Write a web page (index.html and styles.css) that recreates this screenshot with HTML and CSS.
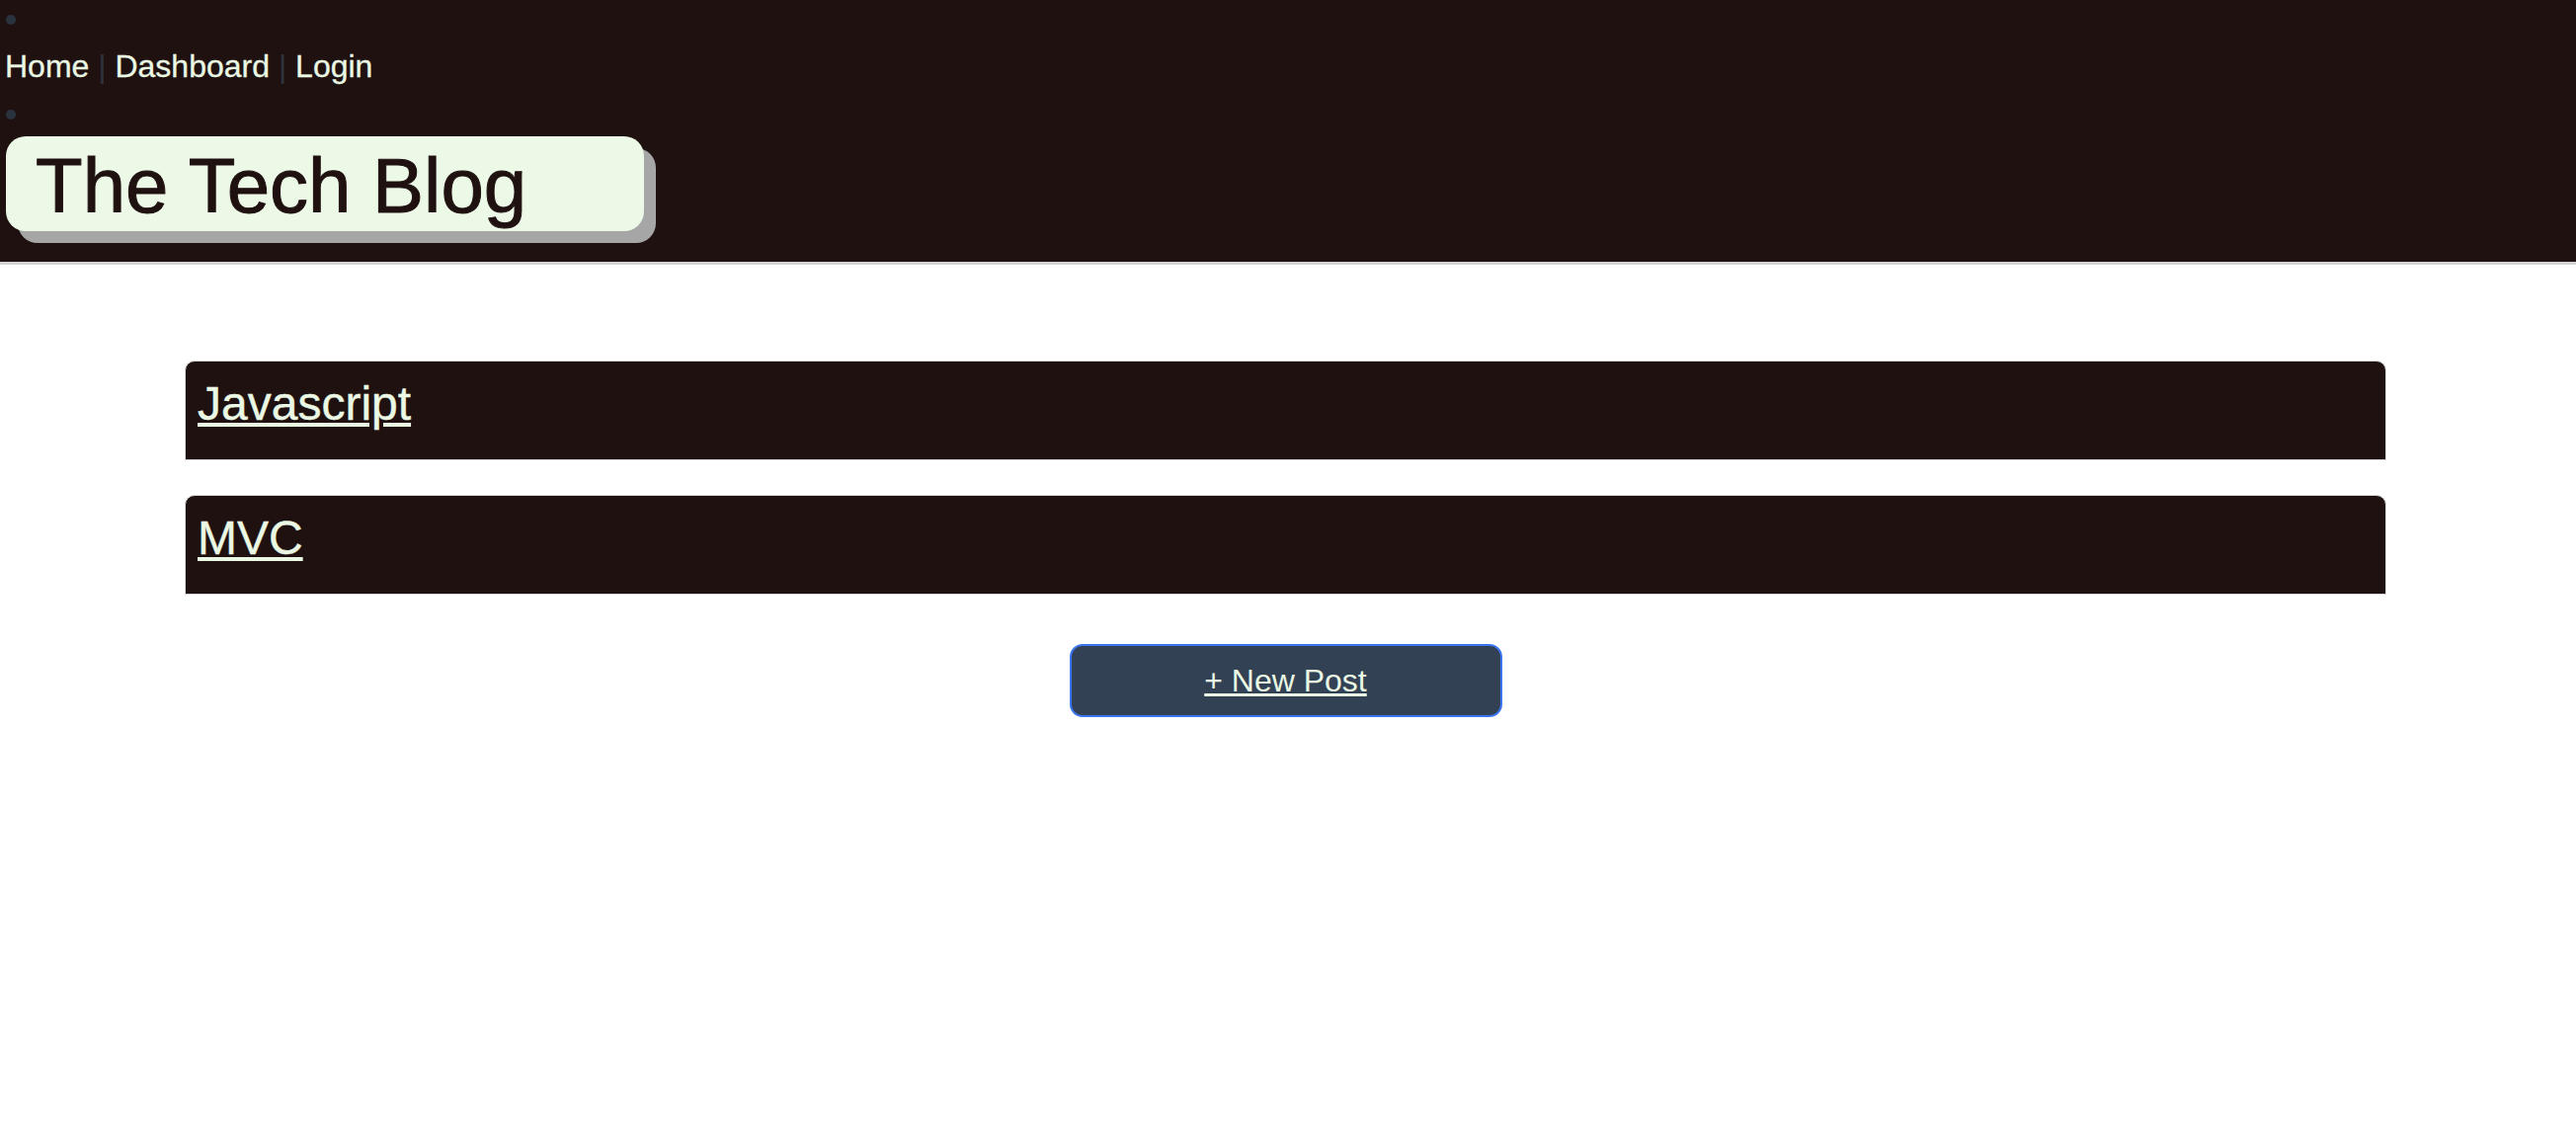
FILE: index.html
```html
<!DOCTYPE html>
<html lang="en">
<head>
<meta charset="utf-8">
<title>The Tech Blog</title>
<link rel="stylesheet" href="styles.css">
</head>
<body>
<header class="site-header">
  <ul class="header-list">
    <li class="header-item">
      <span class="dot"></span>
      <nav class="nav"><a class="nav-link" href="#">Home</a><span class="sep"> | </span><a class="nav-link" href="#">Dashboard</a><span class="sep"> | </span><a class="nav-link" href="#">Login</a></nav>
    </li>
    <li class="header-item">
      <span class="dot dot-second"></span>
      <h1 class="title-box">The Tech Blog</h1>
    </li>
  </ul>
</header>
<main class="content">
  <div class="post-card">
    <h2 class="post-title"><a class="post-link" href="#">Javascript</a></h2>
  </div>
  <div class="post-card">
    <h2 class="post-title"><a class="post-link" href="#">MVC</a></h2>
  </div>
  <div class="actions">
    <a class="new-post" href="#">+ New Post</a>
  </div>
</main>
</body>
</html>
```
FILE: styles.css
```css
html, body {
  margin: 0;
  padding: 0;
  background: #ffffff;
  font-family: "Liberation Sans", Arial, sans-serif;
}

.site-header {
  background: #201111;
  border-bottom: 3px solid #d4d4d4;
  padding: 0 0 31px 0;
}

.header-list {
  list-style: none;
  margin: 0;
  padding: 0;
}

.header-item {
  display: flex;
  flex-direction: column;
  align-items: flex-start;
}

.dot {
  display: block;
  width: 10px;
  height: 10px;
  border-radius: 50%;
  background: #2a333d;
  margin: 15px 0 0 6px;
}

.dot-second {
  margin-top: 20px;
}

.nav {
  margin-top: 18px;
  margin-left: 5px;
  font-size: 32px;
  line-height: 48px;
  white-space: nowrap;
}

.nav-link {
  color: #eaf8e4;
  text-decoration: none;
  -webkit-text-stroke: 0.3px #eaf8e4;
}

.sep {
  color: #2e343c;
  white-space: pre;
}

.title-box {
  margin: 17px 0 0 6px;
  width: 646px;
  box-sizing: border-box;
  padding: 4px 0 0 30px;
  height: 96px;
  font-size: 78px;
  line-height: 92px;
  font-weight: 400;
  color: #201111;
  background: #ebf9e6;
  border-radius: 20px;
  box-shadow: 12px 12px 0 #a6a6a6;
  -webkit-text-stroke: 1px #201111;
}

.content {
  margin: 97px 192px 0 187px;
  display: flex;
  flex-direction: column;
  gap: 35px;
}

.post-card {
  background: #201111;
  border: 1px solid #d6d6d6;
  border-radius: 10px 10px 0 0;
  padding: 11px 12px 24px;
}

.post-title {
  margin: 0;
  font-size: 48px;
  line-height: 64px;
  font-weight: 400;
}

.post-link {
  color: #eaf8e4;
  text-decoration: underline;
  -webkit-text-stroke: 0.4px #eaf8e4;
}

.actions {
  display: flex;
  justify-content: center;
  margin-top: 15px;
}

.new-post {
  display: block;
  width: 438px;
  box-sizing: border-box;
  padding: 11px 0;
  text-align: center;
  font-size: 32px;
  line-height: 48px;
  color: #eaf8e4;
  background: #334155;
  border: 2px solid #3b74f0;
  border-radius: 13px;
  text-decoration: underline;
}
```
